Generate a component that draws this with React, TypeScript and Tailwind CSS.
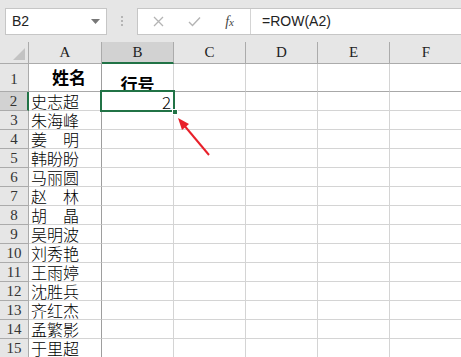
import React from 'react'

const cjk = { fontFamily: '"Noto Sans CJK SC", sans-serif' }
const serif = { fontFamily: '"Liberation Serif", "Noto Sans CJK SC", serif' }

const cols = ['A', 'B', 'C', 'D', 'E', 'F']
const names = [
  ['史志超'],
  ['朱海峰'],
  ['姜', '明'],
  ['韩盼盼'],
  ['马丽圆'],
  ['赵', '林'],
  ['胡', '晶'],
  ['吴明波'],
  ['刘秀艳'],
  ['王雨婷'],
  ['沈胜兵'],
  ['齐红杰'],
  ['孟繁影'],
  ['于里超'],
]

function NameCell({ parts }: { parts: string[] }) {
  return (
    <div
      className="flex h-full w-[50px] items-center justify-between whitespace-nowrap pl-[2px] text-[16px] leading-none font-light text-black"
      style={cjk}
    >
      {parts.map((p) => (
        <span key={p}>{p}</span>
      ))}
    </div>
  )
}

export default function App() {
  return (
    <div className="relative h-[357px] w-[461px] overflow-hidden bg-white">
      {/* formula bar strip */}
      <div className="flex h-[42px] items-center bg-[#e6e6e6] pl-[5px]">
        <div className="flex h-[27px] w-[102px] items-center justify-between border border-[#c6c6c6] bg-white pl-[6px] pr-[6px]">
          <span className="text-[14px] text-[#222]" style={{ fontFamily: '"Liberation Sans", sans-serif' }}>
            B2
          </span>
          <svg width="9" height="5" viewBox="0 0 9 5">
            <path d="M0 0 L9 0 L4.5 5 Z" fill="#777" />
          </svg>
        </div>
        <div className="flex w-[30px] flex-col items-center gap-[2px]">
          <span className="h-[2px] w-[2px] bg-[#b5b5b5]" />
          <span className="h-[2px] w-[2px] bg-[#b5b5b5]" />
          <span className="h-[2px] w-[2px] bg-[#b5b5b5]" />
        </div>
        <div className="flex h-[27px] flex-1 items-center border-y border-l border-[#c6c6c6] bg-white">
          <div className="flex w-[112px] items-center justify-between pl-[15px] pr-[16px]">
            <svg width="11" height="11" viewBox="0 0 11 11">
              <path d="M1 1 L10 10 M10 1 L1 10" stroke="#b4b4b4" strokeWidth="1.3" />
            </svg>
            <svg width="13" height="11" viewBox="0 0 13 11">
              <path d="M1 6 L4.5 9.5 L12 1.5" stroke="#b4b4b4" strokeWidth="1.4" fill="none" />
            </svg>
            <span className="text-[14px] italic text-[#444]" style={serif}>
              f<span className="text-[11px]">x</span>
            </span>
          </div>
          <div className="h-full w-px bg-[#d4d4d4]" />
          <span className="pl-[11px] text-[14px] text-[#222]" style={{ fontFamily: '"Liberation Sans", sans-serif' }}>
            =ROW(A2)
          </span>
        </div>
      </div>

      {/* sheet grid */}
      <div className="grid grid-cols-[29px_73px_72px_72px_72px_72px_73px]">
        {/* header row */}
        <div className="relative h-[22px] border-r border-b border-[#ababab] bg-[#e6e6e6]">
          <svg className="absolute right-[3px] bottom-[3px]" width="12" height="12" viewBox="0 0 12 12">
            <path d="M12 0 L12 12 L0 12 Z" fill="#c3c3c3" />
          </svg>
        </div>
        {cols.map((c) => (
          <div
            key={c}
            className={
              c === 'B'
                ? 'flex h-[22px] items-center justify-center border-r border-b-2 border-r-[#ababab] border-b-[#217346] bg-[#d2d2d2] text-[15px] text-[#222]'
                : 'flex h-[22px] items-center justify-center border-r border-b border-[#ababab] bg-[#e6e6e6] text-[15px] text-[#222]'
            }
            style={serif}
          >
            {c}
          </div>
        ))}

        {/* row 1 */}
        <div className="flex h-[28px] items-end justify-center border-r border-b border-[#ababab] bg-[#e6e6e6] pb-[1px] text-[15px] text-[#333]" style={serif}>
          1
        </div>
        <div className="flex h-[28px] items-start justify-center border-r border-b border-r-[#9e9e9e] border-b-[#a8a8a8] pt-[4px] pl-[8px] text-[17px] font-bold leading-none" style={cjk}>
          姓名
        </div>
        <div className="flex h-[28px] items-end justify-center overflow-hidden border-r border-b border-r-[#d4d4d4] border-b-[#a8a8a8] text-[17px] font-bold leading-none" style={cjk}>
          <span className="translate-y-[1px]">行号</span>
        </div>
        {['C', 'D', 'E', 'F'].map((c) => (
          <div key={c} className="h-[28px] border-r border-b border-r-[#d4d4d4] border-b-[#a8a8a8]" />
        ))}

        {/* rows 2..15 */}
        {names.map((parts, i) => {
          const row = i + 2
          const sel = row === 2
          return (
            <React.Fragment key={row}>
              <div
                className={
                  sel
                    ? 'flex h-[19px] items-center justify-center border-r-2 border-b border-r-[#217346] border-b-[#ababab] bg-[#d2d2d2] text-[15px] text-[#333]'
                    : 'flex h-[19px] items-center justify-center border-r border-b border-[#ababab] bg-[#e6e6e6] text-[15px] text-[#333]'
                }
                style={serif}
              >
                {row}
              </div>
              <div className="h-[19px] border-r border-b border-r-[#9e9e9e] border-b-[#d4d4d4]">
                <NameCell parts={parts} />
              </div>
              <div className="relative h-[19px] border-r border-b border-[#d4d4d4]">
                {sel && (
                  <>
                    <div className="absolute -top-[2px] -left-[2px] right-[-2px] bottom-[-2px] z-10 flex items-center justify-end border-2 border-[#217346] pr-[2px] text-[17px] leading-none font-light" style={cjk}>
                      2
                    </div>
                    <div className="absolute right-[-5px] bottom-[-5px] z-20 h-[6px] w-[6px] border border-white bg-[#217346]" />
                  </>
                )}
              </div>
              {['C', 'D', 'E', 'F'].map((c) => (
                <div key={c} className="h-[19px] border-r border-b border-[#d4d4d4]" />
              ))}
            </React.Fragment>
          )
        })}
      </div>

      {/* red arrow callout */}
      <svg className="absolute top-0 left-0" width="461" height="357" viewBox="0 0 461 357">
        <line x1="209" y1="155" x2="183" y2="124" stroke="#e8202a" strokeWidth="2" />
        <path d="M178 118 L189 124 L182 130 Z" fill="#e8202a" />
      </svg>
    </div>
  )
}
